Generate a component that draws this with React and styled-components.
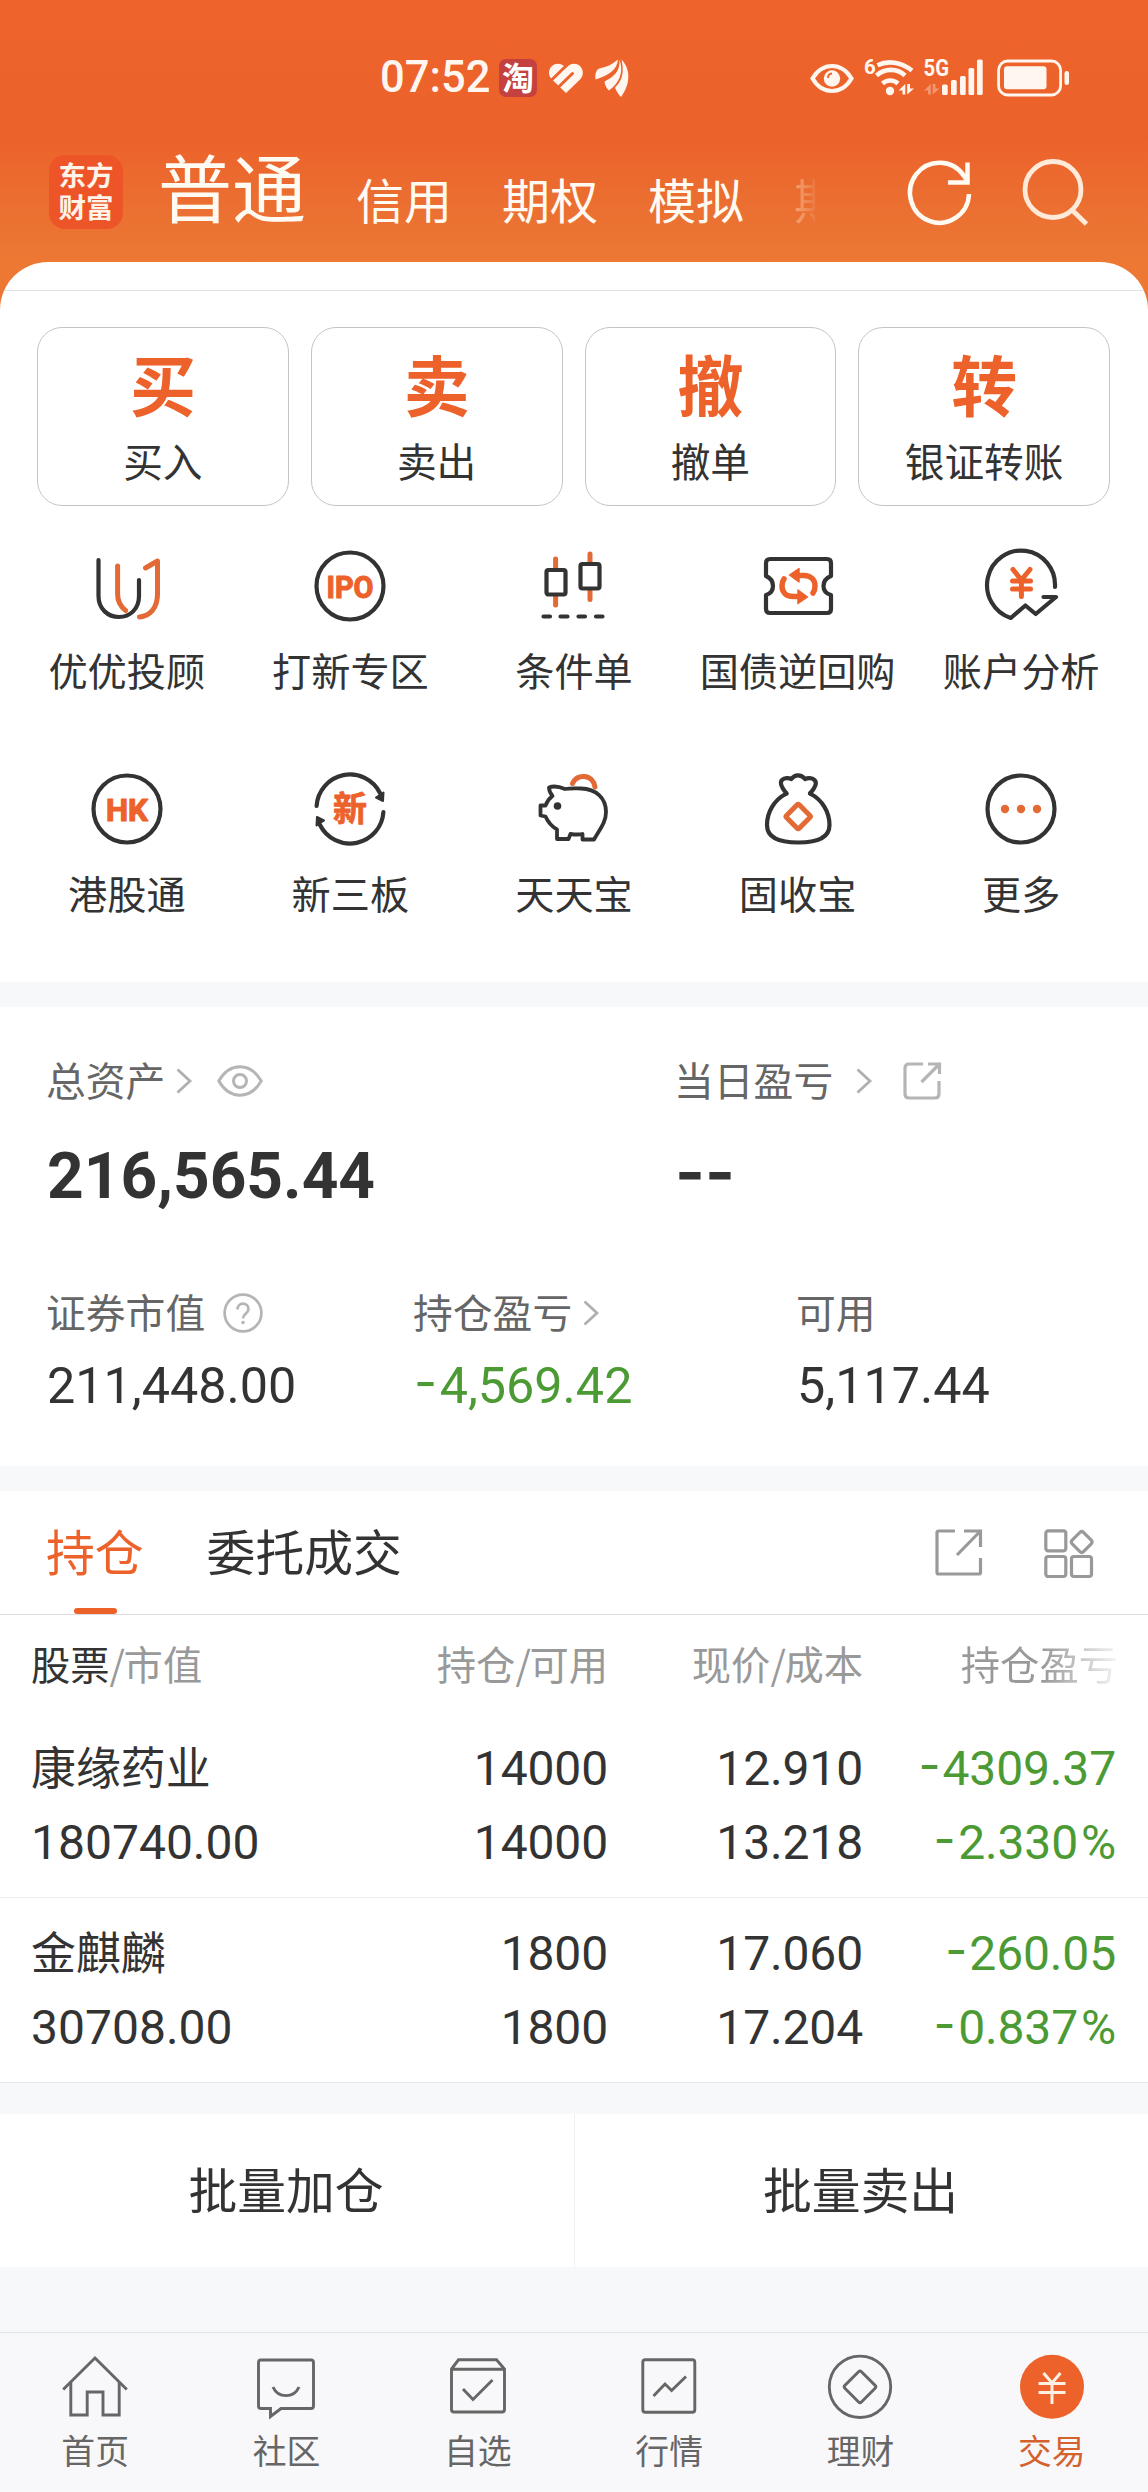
import React from "react";
import styled, { createGlobalStyle, css } from "styled-components";

const cjk = '"Noto Sans CJK SC", "Noto Sans", sans-serif';
const num = 'Roboto, "Noto Sans CJK SC", sans-serif';
const orange = "#ed622b";
const ink = "#333333";
const green = "#4c9a34";
const cream = "#fff6f0";

const Global = createGlobalStyle`
  * { box-sizing: border-box; }
  body { margin: 0; background: #f7f8fa; font-family: ${cjk}; color: ${ink}; }
  svg { display: block; flex: none; overflow: visible; }
`;

const Page = styled.div`
  width: 1148px;
  height: 2492px;
  overflow: hidden;
  display: flex;
  flex-direction: column;
`;

/* ---------- header ---------- */

const Top = styled.section`
  height: 982px;
  flex: none;
  display: flex;
  flex-direction: column;
  background: linear-gradient(180deg, #ee632c 0, #ec622b 138px, #eb6f31 205px, #ec7834 262px, #ec7834 100%);
`;

const StatusBar = styled.div`
  height: 97px;
  padding: 59px 79px 0 380px;
  display: flex;
  justify-content: space-between;
`;

const StatusGroup = styled.div`
  display: flex;
  align-items: center;
  height: 38px;
  gap: ${(p) => p.$gap || 0}px;
`;

const Clock = styled.span`
  width: 107px;
  font: 500 43.5px/40px ${num};
  color: ${cream};
`;

const Taobao = styled.span`
  width: 38px;
  height: 38px;
  border-radius: 7px;
  background: #c5413f;
  color: #fff;
  font: 700 32px/35px ${cjk};
  text-align: center;
`;

const TitleBar = styled.header`
  height: 165px;
  padding: 58px 60px 0 49px;
  display: flex;
  align-items: flex-start;
`;

const Logo = styled.div`
  width: 74px;
  height: 74px;
  border-radius: 16px;
  background: #ed5528;
  color: #fff3ea;
  display: flex;
  flex-direction: column;
  align-items: center;
  padding-top: 6px;
  font: 700 27.5px/32px "Liberation Sans", ${cjk};
`;

const Accounts = styled.nav`
  width: 656px;
  height: 112px;
  margin: -23px 91px 0 36px;
  display: flex;
  align-items: baseline;
  gap: 50px;
  overflow: hidden;
  color: #fffaf2;
  white-space: nowrap;
`;

const Account = styled.span`
  font-size: 48px;
  line-height: 80px;
  ${(p) => p.$active && css`
    font-size: 74px;
    line-height: 110px;
    margin-right: -1px;
    position: relative;
    top: -2px;
    left: -1px;
  `}
  ${(p) => p.$faded && css`
    background: linear-gradient(90deg, rgba(255, 236, 215, 0.42), rgba(255, 236, 215, 0.08) 22px);
    -webkit-background-clip: text;
    background-clip: text;
    color: transparent;
  `}
`;

const HeaderIcon = styled.span`
  margin: ${(p) => p.$margin};
`;

const Sheet = styled.div`
  flex: 1;
  background: #fff;
  border-radius: 48px 48px 0 0;
  overflow: hidden;
`;

const SheetRule = styled.div`
  height: 29px;
  border-bottom: 1px solid #e2e2e2;
`;

/* ---------- actions ---------- */

const Cards = styled.div`
  display: grid;
  grid-template-columns: repeat(4, 1fr);
  gap: 22px;
  padding: 36px 38px 0 37px;
`;

const Card = styled.button`
  height: 179px;
  padding: 14px 0 0;
  border: 1px solid #c4c4c4;
  border-radius: 25px;
  background: #fff;
  display: flex;
  flex-direction: column;
  align-items: center;
  font-family: ${cjk};
  color: ${ink};
`;

const CardMark = styled.b`
  font-size: 66px;
  line-height: 80px;
  color: ${orange};
`;

const CardLabel = styled.span`
  font-size: 39.7px;
  line-height: 50px;
  margin-top: 13px;
`;

const Tools = styled.div`
  display: grid;
  grid-template-columns: repeat(5, 1fr);
  row-gap: 22px;
  padding: 44px 15px 0;
`;

const Tool = styled.div`
  height: 201px;
  display: flex;
  flex-direction: column;
  align-items: center;
`;

const ToolLabel = styled.span`
  margin-top: 21px;
  font-size: 39.2px;
  line-height: 52px;
  white-space: nowrap;
`;

/* ---------- assets ---------- */

const Assets = styled.section`
  flex: none;
  height: 459px;
  margin-top: 25px;
  background: #fff;
`;

const AssetLine = styled.div`
  display: grid;
  grid-template-columns: ${(p) => p.$cols};
  padding: ${(p) => p.$pad} 0 0 46px;
`;

const Label = styled.div`
  display: flex;
  align-items: center;
  height: 48px;
  font-size: 39.8px;
  line-height: 48px;
  color: #666;
`;

const LabelIcon = styled.span`
  margin-left: ${(p) => p.$left}px;
  margin-top: 4px;
`;

const Amount = styled.div`
  font: 400 50.3px/60px ${num};
  color: ${(p) => (p.$down ? green : ink)};
  margin: 21px 0 0 1px;
  ${(p) => p.$big && css`font-weight: 700; font-size: 64px; line-height: 76px; margin: 36px 0 0 1px;`}
`;

const Dash = styled.span`
  font-family: Inter, ${num};
  letter-spacing: ${(p) => p.$spacing ?? 1}px;
  line-height: 0;
  position: relative;
  top: -3px;
`;

/* ---------- holdings ---------- */

const Holdings = styled.section`
  flex: none;
  margin-top: 25px;
  height: 592px;
  background: #fff;
  border-bottom: 1px solid #e9eaec;
`;

const Tabs = styled.div`
  height: 124px;
  padding: 0 54px 0 46px;
  border-bottom: 1px solid #dedede;
  display: flex;
`;

const Tab = styled.div`
  display: flex;
  flex-direction: column;
  align-items: center;
  margin-right: 63px;
  padding-top: 29px;
  font-size: 48.8px;
  line-height: 60px;
  color: ${(p) => (p.$active ? orange : ink)};
  &::after {
    content: "";
    width: 43px;
    height: 6px;
    margin: 28px 0 0 1px;
    border-radius: 3px;
    background: ${(p) => (p.$active ? orange : "transparent")};
  }
`;

const TabTools = styled.div`
  margin: 38px 0 0 auto;
  display: flex;
  gap: 61px;
`;

const Grid = styled.div`
  display: grid;
  grid-template-columns: 302px 275px 255px 253px;
  padding: 0 31px;
`;

const HeadRow = styled(Grid)`
  height: 99px;
  padding-top: 24px;
  font-size: 39.3px;
  line-height: 48px;
  color: #999;
`;

const HeadCell = styled.div`
  text-align: ${(p) => (p.$left ? "left" : "right")};
  white-space: nowrap;
  ${(p) => p.$faded && css`
    margin-right: -2px;
    background: linear-gradient(90deg, #999 180px, rgba(153, 153, 153, 0.1) 100%);
    -webkit-background-clip: text;
    background-clip: text;
    color: transparent;
  `}
`;

const Strong = styled.span`
  color: ${ink};
`;

const Slash = styled.span`
  letter-spacing: -1.4px;
`;

const StockRow = styled(Grid)`
  height: 184px;
  padding-top: ${(p) => (p.$last ? 19 : 18)}px;
  ${(p) => !p.$last && css`border-bottom: 1px solid #ececec;`}
`;

const Cell = styled.div`
  display: flex;
  flex-direction: column;
  align-items: ${(p) => (p.$left ? "flex-start" : "flex-end")};
  font: 400 48px/74px ${num};
  letter-spacing: ${(p) => (p.$left ? 0 : -0.15)}px;
  color: ${(p) => (p.$down ? green : ink)};
  white-space: nowrap;
`;

const StockName = styled.span`
  font: 400 44.9px/74px ${cjk};
  height: 74px;
  margin: -3px 0 3px;
`;

const Percent = styled.span`
  margin-left: 3px;
`;

/* ---------- batch buttons and bottom bar ---------- */

const Batch = styled.div`
  flex: none;
  margin-top: 31px;
  height: 153px;
  display: grid;
  grid-template-columns: 1fr 1fr;
  background: #fff;
`;

const BatchButton = styled.div`
  padding-right: 2px;
  font-size: 48.8px;
  line-height: 147px;
  text-align: center;
  & + & { border-left: 1px solid #f0f0f2; }
`;

const BottomBar = styled.nav`
  flex: none;
  margin-top: auto;
  height: 160px;
  border-top: 1px solid #e2e3e5;
  background: #f8f8fa;
  display: grid;
  grid-template-columns: repeat(6, 1fr);
`;

const BottomItem = styled.div`
  padding: 21px 1px 0 0;
  display: flex;
  flex-direction: column;
  align-items: center;
  font-size: 33.8px;
  line-height: 44px;
  color: ${(p) => (p.$active ? "#d4622f" : "#666")};
  svg { margin-bottom: 8px; }
`;

/* ---------- icons ---------- */

const Heart = () => (
  <svg width="34" height="38" viewBox="0 0 34 38">
    <path d="M17 34 L3 20.500 C-1.500 16 -.5 10 3 7 C7 3.500 12.500 4 17 8.500 C21.500 4 27 3.500 31 7 C34.500 10.500 35 16.500 31 20.500 Z" fill={cream} />
    <path d="M1 22.500L18 6M8 29.500L23.500 14.500" stroke={orange} strokeWidth="3" strokeLinecap="round" />
  </svg>
);

const Wing = () => (
  <svg width="34" height="38" viewBox="0 0 34 38" fill={cream}>
    <path d="M.6 20.500C-.4 14 2 10 4.500 9.500C12 8 18 5 23 .5C22 11 14 16 .6 20.500Z" />
    <path d="M24.500 .5C25.500 13 18 18 9.500 22.500C10 27 12 29.500 14 31.500C24.500 24 29 13 24.500 .5Z" />
    <path d="M26.500 .5C29.500 14 27 22 20 28.500C21 32 24 36 26 38C35 26 36.500 11 26.500 .5Z" />
  </svg>
);

const EyeStatus = () => (
  <svg width="44" height="38" viewBox="0 0 44 38" fill="none" stroke={cream}>
    <path d="M2.500 19.500C7 12 14 7 22 7s15 5 19.500 12.500C37 27 30 32 22 32S7 27 2.500 19.500Z" strokeWidth="4.200" />
    <circle cx="22" cy="19.500" r="8.200" fill={cream} stroke="none" />
    <path d="M18 19a4.500 4.500 0 0 1 4-4.500" stroke={orange} strokeWidth="1.800" />
  </svg>
);

const MiniArrows = ({ x, opacity }) => (
  <path transform={`translate(${x} 25)`} opacity={opacity} fill={cream} d="M6.800 0V10.500H4V6.500H0ZM8.700 10.500V0H11.500V4.500H15.500Z" />
);

const WifiStatus = () => (
  <svg width="50" height="38" viewBox="0 0 50 38">
    <text x="0" y="14.500" fontFamily="Roboto" fontWeight="700" fontSize="20.500" fill={cream}>6</text>
    <g fill="none" stroke={cream} strokeWidth="4.600">
      <path d="M13.500 6.200C24 1 37 3 48 11.500" />
      <path d="M12.500 16.500C21 9 33 9 41 16.500" />
      <path d="M18.500 24.500C23 20.500 29.500 20.500 34 24.500" />
    </g>
    <circle cx="26" cy="32" r="4.200" fill={cream} />
    <MiniArrows x={34.5} />
  </svg>
);

const SignalStatus = () => (
  <svg width="60" height="38" viewBox="0 0 60 38" fill={cream}>
    <text x="-.5" y="17" fontFamily="Roboto" fontWeight="700" fontSize="24" textLength="25.500" lengthAdjust="spacingAndGlyphs">5G</text>
    <MiniArrows x={0} opacity=".35" />
    {[[18, 25.500], [27, 21], [36, 17], [44.500, 9], [53, 0.500]].map(([x, y]) => (
      <rect key={x} x={x} y={y} width="5.700" height={36 - y} rx="1.500" />
    ))}
  </svg>
);

const Battery = () => (
  <svg width="72" height="38" viewBox="0 0 72 38">
    <rect x="1.600" y="2" width="62" height="34" rx="9" fill="none" stroke={cream} strokeWidth="2.800" />
    <rect x="7" y="7.300" width="42.500" height="23" rx="3" fill={cream} />
    <rect x="67.500" y="12" width="4.500" height="14" rx="2.200" fill={cream} />
  </svg>
);

const Refresh = () => (
  <svg width="64" height="66" viewBox="0 0 64 66" fill="none" stroke="#fffaf2" strokeWidth="4.500">
    <path d="M62 34A29.500 30 0 1 1 57 16L61 22" />
    <path d="M60.500 2.500V22.500H41" />
  </svg>
);

const Search = () => (
  <svg width="66" height="66" viewBox="0 0 66 66" fill="none" stroke="#ffe9d8" strokeWidth="4.800">
    <circle cx="31" cy="30.500" r="28" />
    <path d="M50.500 51.500L64.500 65" />
  </svg>
);

const ToolSvg = ({ children }) => (
  <svg width="72" height="72" viewBox="0 0 72 72" fill="none" stroke={ink} strokeWidth="4.200" strokeLinecap="round" strokeLinejoin="round">
    {children}
  </svg>
);

const Ring = () => <circle cx="36" cy="36" r="33.500" />;

const IconText = ({ size, y, width, stroke = 1.2, family = "Roboto", children }) => (
  <text x="36" y={y} textAnchor="middle" fontFamily={family} fontWeight="700" fontSize={size} fill={orange} stroke={orange}
    strokeWidth={stroke} textLength={width} lengthAdjust="spacingAndGlyphs">{children}</text>
);

const toolIcons = {
  advisor: (
    <ToolSvg>
      <path d="M7.500 10V46C7.500 59 17 67 28 67S48 59 48 46V30" />
      <g stroke="#e36a35" strokeWidth="5">
        <path d="M26.600 16V44C26.600 51 30 57 34.700 60.500" />
        <path d="M54.500 18L66.500 11V44C66.500 58 59 66 48.500 67" />
      </g>
    </ToolSvg>
  ),
  ipo: (
    <ToolSvg><Ring /><IconText size="32" y="47.500" width="47">IPO</IconText></ToolSvg>
  ),
  condition: (
    <ToolSvg>
      <path d="M17.600 9V18M17.600 46V55M52 4V12M52 41V49.500" stroke="#e36a35" strokeWidth="5" />
      <rect x="8.500" y="20" width="19" height="24.500" rx="2" />
      <rect x="42.500" y="14" width="19" height="24.500" rx="2" />
      <path d="M5.500 66.500H12M22.500 66.500H29.500M40.500 66.500H47M58 66.500H64.500" />
    </ToolSvg>
  ),
  repo: (
    <ToolSvg>
      <path d="M8 9H65Q69 9 69 13V26Q61.500 29 61.500 36T69 45V59Q69 63 65 63H8Q4 63 4 59V45Q11 43 11 36T4 26V13Q4 9 8 9Z" />
      {[0, 180].map((a) => (
        <g key={a} transform={`rotate(${a} 36.500 36)`} stroke="none" fill={orange}>
          <path d="M36 25.500H42C49 25.500 53 30 53 36C53 39 52.500 41 51 43" fill="none" stroke={orange} strokeWidth="5.500" />
          <path d="M27.500 25L37 18.500V32Z" stroke={orange} strokeWidth="1.500" />
        </g>
      ))}
    </ToolSvg>
  ),
  analysis: (
    <ToolSvg>
      <path d="M70 37A34 34.500 0 1 0 25.800 68L40.400 55.500L50.700 64L71 47H58.500" />
      <path d="M28 19.500L36.400 30L45 19.500M36.400 30V46.500M27.500 31H45.500M27.500 39H45.500" stroke={orange} strokeWidth="5" />
    </ToolSvg>
  ),
  hk: (
    <ToolSvg><Ring /><IconText size="32" y="47.500" width="42">HK</IconText></ToolSvg>
  ),
  neeq: (
    <ToolSvg>
      {[0, 180].map((a) => (
        <g key={a} transform={`rotate(${a} 36 36)`}>
          <path d="M2.600 33A33.500 33.500 0 0 1 66 20" />
          <path d="M62 24.500L69.500 19.500L69 28Z" fill={ink} strokeWidth="2" />
        </g>
      ))}
      <IconText size="34" y="48" width="34" stroke={0.8} family="Noto Sans CJK SC">新</IconText>
    </ToolSvg>
  ),
  piggy: (
    <ToolSvg>
      <path d="M34.500 10.500C37 5 41 3.300 46 3.500C52 3.800 56 8 57 14" stroke="#e36a35" strokeWidth="5" />
      <path d="M11 14.500C16 12.500 21 13.500 27 16C33 15 38 15.500 43 15.500C58 16 68 25 68 39C68 50 61 57 56 66.500H44.500V61C40 62 36 61.500 32.500 61L30.500 66H19V56.500C13 53 9.500 48 7.500 43.500L2.500 42.500V32.500H7.500C9 28.500 11 25.500 14.500 23C12 20 11 18 11 14.500Z" strokeWidth="3.800" />
      <circle cx="19.500" cy="33" r="3.800" fill={ink} stroke="none" />
    </ToolSvg>
  ),
  bag: (
    <ToolSvg>
      <path d="M24.500 20.500C12 27 5 39 5 52C5 64 17 69.500 36.300 69.500S67.500 64 67.500 52C67.500 39 60.500 27 48 20.500" />
      <path d="M24.500 20.500C20 15 17 10 20 7C22.500 4.500 27 4.800 29.500 6C31 3.500 33 2.300 36 2.300S41 3.500 43 6C45.500 4.800 50 4.500 52.500 7C55.500 10 53 15 48 20.500" />
      <rect x="27.200" y="34.500" width="18" height="18" rx="1.500" transform="rotate(45 36.200 43.500)" stroke="#e36a35" strokeWidth="5" />
    </ToolSvg>
  ),
  more: (
    <ToolSvg>
      <Ring />
      <g fill="#e36a35" stroke="none"><circle cx="20" cy="36" r="4.200" /><circle cx="36" cy="36" r="4.200" /><circle cx="52" cy="36" r="4.200" /></g>
    </ToolSvg>
  ),
};

const Chevron = () => (
  <svg width="16" height="26" viewBox="0 0 16 26" fill="none" stroke="#b0b0b0" strokeWidth="2.800">
    <path d="M1.500 1.500L14 13L1.500 24.500" />
  </svg>
);

const EyeLine = () => (
  <svg width="46" height="32" viewBox="0 0 46 32" fill="none" stroke="#b5b5b5" strokeWidth="3">
    <path d="M1.800 16C7 7 14 1.800 23 1.800S39 7 44.200 16C39 25 32 30.200 23 30.200S7 25 1.800 16Z" />
    <circle cx="23" cy="16" r="6.500" />
  </svg>
);

const ShareSmall = () => (
  <svg width="38" height="38" viewBox="0 0 38 38" fill="none" stroke="#b5b5b5" strokeWidth="3.200">
    <path d="M20 2H6Q2 2 2 6V32Q2 36 6 36H32Q36 36 36 32V19" />
    <path d="M25 2H36.500V12M36 2.500L18.500 20" />
  </svg>
);

const Question = () => (
  <svg width="40" height="40" viewBox="0 0 40 40" fill="none" stroke="#b5b5b5" strokeWidth="2.700">
    <circle cx="20" cy="20" r="18.400" />
    <path d="M14.500 16.500C14.500 8.800 25.500 8.800 25.500 16C25.500 20.500 20 20.500 20 25.500" />
    <circle cx="20" cy="29.500" r="1.800" fill="#b5b5b5" stroke="none" />
  </svg>
);

const ShareLarge = () => (
  <svg width="48" height="48" viewBox="0 0 48 48" fill="none" stroke="#999" strokeWidth="3.200">
    <path d="M20 2H3.500Q2 2 2 3.500V43.500Q2 45 3.500 45H44Q45.500 45 45.500 43.500V29" />
    <path d="M29 2H45.500V18M45 2.500L22 26" />
  </svg>
);

const Widgets = () => (
  <svg width="50" height="50" viewBox="0 0 50 50" fill="none" stroke="#999" strokeWidth="3.200">
    <rect x="1.800" y="1.800" width="20" height="20" rx="2.500" />
    <rect x="1.800" y="27.500" width="20" height="20" rx="2.500" />
    <rect x="27.500" y="27.500" width="20" height="20" rx="2.500" />
    <rect x="29.700" y="5" width="16" height="16" rx="2.500" transform="rotate(45 37.700 13)" />
  </svg>
);

const BarSvg = ({ children }) => (
  <svg width="66" height="66" viewBox="0 0 66 66" fill="none" stroke="#666" strokeWidth="2.900">{children}</svg>
);

const barIcons = {
  home: (
    <BarSvg>
      <path d="M1.200 35.500L33 4L64.800 35.500" />
      <path d="M8.800 28V61H25.200V38H41V61H57.200V28" />
    </BarSvg>
  ),
  chat: (
    <BarSvg>
      <path d="M8 6H58Q60.500 6 60.500 8.500V52Q60.500 54.500 58 54.500H28L17.500 62.500V54.500H8Q5.500 54.500 5.500 52V8.500Q5.500 6 8 6Z" />
      <path d="M20 33C25 44.500 41 44.500 46 33" />
    </BarSvg>
  ),
  watch: (
    <BarSvg>
      <path d="M6.500 15L13.500 5.800H51.500L59.500 15V55.500Q59.500 58 57 58H9Q6.500 58 6.500 55.500ZM6.500 15.200H59.500" />
      <path d="M18 35L28 45.500L47.500 26" />
    </BarSvg>
  ),
  market: (
    <BarSvg>
      <rect x="6.800" y="5.800" width="52" height="52.500" rx="2.500" />
      <path d="M17.500 42L29 30L35.600 36.500L50 22.500" />
    </BarSvg>
  ),
  wealth: (
    <BarSvg>
      <circle cx="33" cy="32.800" r="30.700" />
      <rect x="21.300" y="21.100" width="23.400" height="23.400" rx="2" transform="rotate(45 33 32.800)" />
    </BarSvg>
  ),
  trade: (
    <BarSvg>
      <circle cx="33" cy="32.800" r="32" fill={orange} stroke="none" />
      <path d="M24.500 19L33 29L41.500 19M33 29V50M19.500 29.500H46.500M19.500 38.500H46.500" stroke="#fff0e4" strokeWidth="3" />
    </BarSvg>
  ),
};

/* ---------- data ---------- */

const cards = [["买", "买入"], ["卖", "卖出"], ["撤", "撤单"], ["转", "银证转账"]];

const tools = [
  ["advisor", "优优投顾"], ["ipo", "打新专区"], ["condition", "条件单"], ["repo", "国债逆回购"], ["analysis", "账户分析"],
  ["hk", "港股通"], ["neeq", "新三板"], ["piggy", "天天宝"], ["bag", "固收宝"], ["more", "更多"],
];

const stocks = [
  { name: "康缘药业", value: "180740.00", held: "14000", free: "14000", price: "12.910", cost: "13.218", gain: "4309.37", rate: "2.330" },
  { name: "金麒麟", value: "30708.00", held: "1800", free: "1800", price: "17.060", cost: "17.204", gain: "260.05", rate: "0.837" },
];

const bar = [["home", "首页"], ["chat", "社区"], ["watch", "自选"], ["market", "行情"], ["wealth", "理财"], ["trade", "交易"]];

export default function App() {
  return (
    <Page>
      <Global />
      <Top>
        <StatusBar>
          <StatusGroup $gap={12}>
            <Clock>07:52</Clock>
            <Taobao>淘</Taobao>
            <Heart />
            <Wing />
          </StatusGroup>
          <StatusGroup $gap={10}>
            <EyeStatus />
            <WifiStatus />
            <SignalStatus />
            <HeaderIcon $margin="0 0 0 3px"><Battery /></HeaderIcon>
          </StatusGroup>
        </StatusBar>
        <TitleBar>
          <Logo><span>东方</span><span>财富</span></Logo>
          <Accounts>
            <Account $active>普通</Account>
            <Account>信用</Account>
            <Account>期权</Account>
            <Account>模拟</Account>
            <Account $faded>期货</Account>
          </Accounts>
          <HeaderIcon $margin="5px 51px 0 1px"><Refresh /></HeaderIcon>
          <HeaderIcon $margin="4px 0 0"><Search /></HeaderIcon>
        </TitleBar>
        <Sheet>
          <SheetRule />
          <Cards>
            {cards.map(([mark, label]) => (
              <Card key={label}><CardMark>{mark}</CardMark><CardLabel>{label}</CardLabel></Card>
            ))}
          </Cards>
          <Tools>
            {tools.map(([icon, label]) => (
              <Tool key={label}>{toolIcons[icon]}<ToolLabel>{label}</ToolLabel></Tool>
            ))}
          </Tools>
        </Sheet>
      </Top>

      <Assets>
        <AssetLine $cols="628px 1fr" $pad="48px">
          <div>
            <Label>总资产<LabelIcon $left={11}><Chevron /></LabelIcon><LabelIcon $left={25}><EyeLine /></LabelIcon></Label>
            <Amount $big>216,565.44</Amount>
          </div>
          <div>
            <Label>当日盈亏<LabelIcon $left={23}><Chevron /></LabelIcon><LabelIcon $left={31}><ShareSmall /></LabelIcon></Label>
            <Amount $big><Dash $spacing={0}>--</Dash></Amount>
          </div>
        </AssetLine>
        <AssetLine $cols="367px 383px 1fr" $pad="72px">
          <div>
            <Label>证券市值<LabelIcon $left={18}><Question /></LabelIcon></Label>
            <Amount>211,448.00</Amount>
          </div>
          <div>
            <Label>持仓盈亏<LabelIcon $left={11}><Chevron /></LabelIcon></Label>
            <Amount $down><Dash $spacing={2.5}>-</Dash>4,569.42</Amount>
          </div>
          <div>
            <Label>可用</Label>
            <Amount>5,117.44</Amount>
          </div>
        </AssetLine>
      </Assets>

      <Holdings>
        <Tabs>
          <Tab $active>持仓</Tab>
          <Tab>委托成交</Tab>
          <TabTools><ShareLarge /><Widgets /></TabTools>
        </Tabs>
        <HeadRow>
          <HeadCell $left><Strong>股票</Strong><Slash>/</Slash>市值</HeadCell>
          <HeadCell>持仓<Slash>/</Slash>可用</HeadCell>
          <HeadCell>现价<Slash>/</Slash>成本</HeadCell>
          <HeadCell $faded>持仓盈亏</HeadCell>
        </HeadRow>
        {stocks.map((s, i) => (
          <StockRow key={s.name} $last={i === stocks.length - 1}>
            <Cell $left><StockName>{s.name}</StockName><span>{s.value}</span></Cell>
            <Cell><span>{s.held}</span><span>{s.free}</span></Cell>
            <Cell><span>{s.price}</span><span>{s.cost}</span></Cell>
            <Cell $down>
              <span><Dash $spacing={2}>-</Dash>{s.gain}</span>
              <span><Dash $spacing={2.5}>-</Dash>{s.rate}<Percent>%</Percent></span>
            </Cell>
          </StockRow>
        ))}
      </Holdings>

      <Batch>
        <BatchButton>批量加仓</BatchButton>
        <BatchButton>批量卖出</BatchButton>
      </Batch>

      <BottomBar>
        {bar.map(([icon, label]) => (
          <BottomItem key={icon} $active={icon === "trade"}>{barIcons[icon]}<span>{label}</span></BottomItem>
        ))}
      </BottomBar>
    </Page>
  );
}
